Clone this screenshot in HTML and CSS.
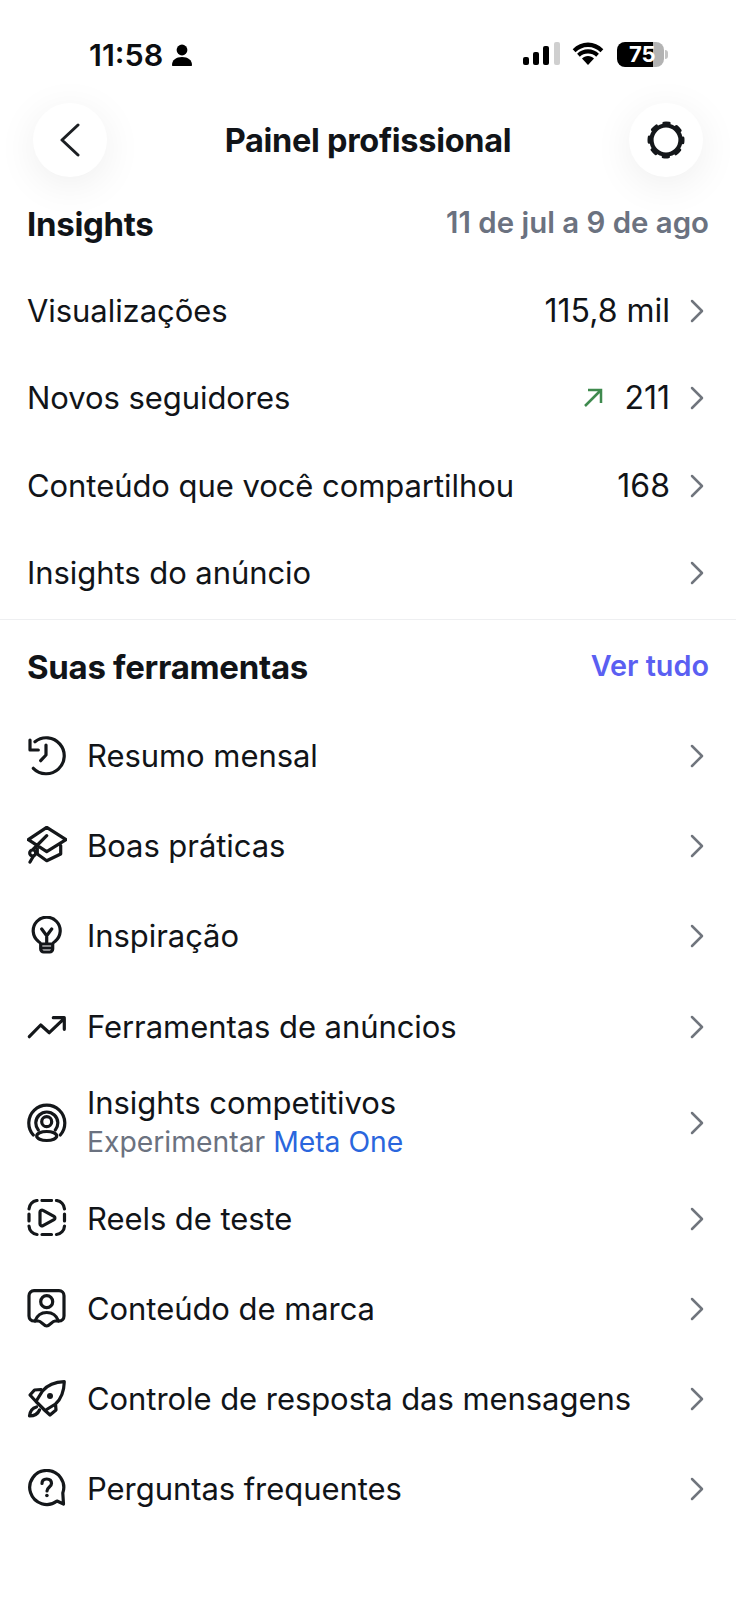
FILE: index.html
```html
<!DOCTYPE html>
<html lang="pt-BR">
<head>
<meta charset="utf-8">
<title>Painel profissional</title>
<link rel="stylesheet" href="styles.css">
</head>
<body>
<div class="status">
  <div class="status-left">
    <span class="clock">11:58</span>
    <svg class="person" viewBox="0 0 20 22" aria-hidden="true"><circle cx="10" cy="6" r="5.4"/><path d="M0 21c0-5 4-8 10-8s10 3 10 8c0 .6-.4 1-1 1H1c-.6 0-1-.4-1-1z"/></svg>
  </div>
  <div class="status-right">
    <svg class="signal" viewBox="0 0 37 24" aria-hidden="true"><rect x="0" y="15" width="6" height="8" rx="2"/><rect x="10" y="10" width="6" height="13" rx="2"/><rect x="20" y="4" width="6" height="19" rx="2"/><rect class="dim" x="31" y="0" width="6" height="23" rx="2"/></svg>
    <svg class="wifi" viewBox="0 0 32 24" aria-hidden="true"><path d="M16 5c5 0 9 2 12.500 5.200l2.800-3C27 3 21.700 .6 16 .6S5 3 .7 7.200l2.800 3C7 7 11 5 16 5z"/><path d="M16 11.500c3.300 0 6 1.200 8.200 3.200l2.700-3C24 9 20.200 7.300 16 7.300S8 9 5.100 11.700l2.700 3c2.200-2 4.900-3.200 8.200-3.200z"/><path d="M16 14c-2.400 0-4.500 1-6 2.400L16 23l6-6.600C20.500 15 18.400 14 16 14z"/></svg>
    <div class="battery"><div class="battery-body"><span class="battery-level">75</span></div><span class="battery-cap"></span></div>
  </div>
</div>

<header class="topbar">
  <button class="round" aria-label="Voltar"><svg class="i-back" viewBox="0 0 20 36"><path d="M18 3 2 18l16 15"/></svg></button>
  <h1 class="title">Painel profissional</h1>
  <button class="round" aria-label="Configurações"><svg class="i-gear" viewBox="0 0 40 40"><circle class="ring" cx="20" cy="20" r="14.500"/><circle class="teeth" cx="20" cy="20" r="17"/></svg></button>
</header>

<section class="insights">
  <div class="sec-head"><h2>Insights</h2><span class="date">11 de jul a 9 de ago</span></div>
  <div class="row"><span class="label">Visualizações</span><span class="value">115,8 mil</span><svg class="chev" viewBox="0 0 14 24"><path d="M2 2l10 10L2 22"/></svg></div>
  <div class="row"><span class="label">Novos seguidores</span><svg class="up" viewBox="0 0 20 20"><path d="M2 18 18 2M5 2h13v13"/></svg><span class="value">211</span><svg class="chev" viewBox="0 0 14 24"><path d="M2 2l10 10L2 22"/></svg></div>
  <div class="row"><span class="label">Conteúdo que você compartilhou</span><span class="value">168</span><svg class="chev" viewBox="0 0 14 24"><path d="M2 2l10 10L2 22"/></svg></div>
  <div class="row"><span class="label">Insights do anúncio</span><svg class="chev" viewBox="0 0 14 24"><path d="M2 2l10 10L2 22"/></svg></div>
</section>

<section class="tools">
  <div class="sec-head tools-head"><h2>Suas ferramentas</h2><a class="all">Ver tudo</a></div>

  <div class="tool"><svg class="ic" viewBox="0 0 40 40"><path d="M8 5.700A18 18 0 1 1 6.300 32.300M3 4v10h8.300M19 9v10l-5.300 5.700"/></svg><span class="label">Resumo mensal</span><svg class="chev" viewBox="0 0 14 24"><path d="M2 2l10 10L2 22"/></svg></div>

  <div class="tool"><svg class="ic" viewBox="0 0 40 40"><path d="M19.700 1.300 39 13.700 19.700 25.700 1.300 13.700zM33.700 19.500V28l-14 6.700-9.400-6.700v-5M19.700 9.700 6.500 23M6.500 30l-3.500 6"/><circle cx="5.700" cy="27" r="3"/></svg><span class="label">Boas práticas</span><svg class="chev" viewBox="0 0 14 24"><path d="M2 2l10 10L2 22"/></svg></div>

  <div class="tool"><svg class="ic" viewBox="0 0 40 40"><path d="M13.700 28C13.700 27 12.800 26.300 11.200 25.200A13.500 13.500 0 1 1 28.200 25.200C26.600 26.300 25.700 27 25.700 28v5a3 3 0 0 1-3 3h-6a3 3 0 0 1-3-3zM14.700 13l5 6.700 5-6.700M19.700 19.700V28M13.700 28h12M13.700 32h12"/></svg><span class="label">Inspiração</span><svg class="chev" viewBox="0 0 14 24"><path d="M2 2l10 10L2 22"/></svg></div>

  <div class="tool"><svg class="ic" viewBox="0 0 40 40"><path d="M2.300 29.700 13.700 18l8.600 7.700L37.300 11.300M26.300 10.700h11v11.600"/></svg><span class="label">Ferramentas de anúncios</span><svg class="chev" viewBox="0 0 14 24"><path d="M2 2l10 10L2 22"/></svg></div>

  <div class="tool tool-tall"><svg class="ic" viewBox="0 0 40 40"><path d="M6.300 32a18 18 0 1 1 27 0M11.300 27a11 11 0 1 1 17 0"/><circle cx="19.700" cy="18.700" r="5"/><ellipse cx="19.700" cy="33" rx="10" ry="4.500"/></svg><div class="stack"><span class="label">Insights competitivos</span><span class="sub">Experimentar <span class="meta">Meta One</span></span></div><svg class="chev" viewBox="0 0 14 24"><path d="M2 2l10 10L2 22"/></svg></div>

  <div class="tool"><svg class="ic" viewBox="0 0 40 40"><path d="M2 10a9 9 0 0 1 8-8.500M15 1.500h9.500M29.500 1.500a9 9 0 0 1 8 8.500M37.500 15v7M37.500 27a9 9 0 0 1-8 8.500M24.500 35.500H15M10 35.500a9 9 0 0 1-8-8.500M2 22v-7"/><path d="M13 13a2 2 0 0 1 3-1.700l11 6a2 2 0 0 1 0 3.400l-11 6a2 2 0 0 1-3-1.700z"/></svg><span class="label">Reels de teste</span><svg class="chev" viewBox="0 0 14 24"><path d="M2 2l10 10L2 22"/></svg></div>

  <div class="tool"><svg class="ic" viewBox="0 0 40 40"><path d="M7 1.700h25a5 5 0 0 1 5 5V27a5 5 0 0 1-5 5h-4c-3 0-5 5-8.300 5s-5.300-5-8.300-5H7a5 5 0 0 1-5-5V6.700a5 5 0 0 1 5-5z"/><circle cx="19.700" cy="12.700" r="6"/><path d="M8 32c2-5.500 6-8.500 11.700-8.500s9.800 3 11.800 8.500"/></svg><span class="label">Conteúdo de marca</span><svg class="chev" viewBox="0 0 14 24"><path d="M2 2l10 10L2 22"/></svg></div>

  <div class="tool"><svg class="ic" viewBox="0 0 40 40"><path d="M37.300 2.700C28 3 20.500 6 15.500 12L9 22.500l9 9 10.500-6.500c5.500-5 8.500-12.500 8.800-22.300zM14 10.500 7.500 11 3 16l6 6.500M28.500 25l.5 6-6 5-5-4.500M9.500 28c-4 1-6.500 4-7 9 5 0 8.500-2.500 10-6"/><circle class="solid" cx="23" cy="17" r="3"/></svg><span class="label">Controle de resposta das mensagens</span><svg class="chev" viewBox="0 0 14 24"><path d="M2 2l10 10L2 22"/></svg></div>

  <div class="tool"><svg class="ic" viewBox="0 0 40 40"><path d="M35.800 24A17 17 0 1 0 30 32l6.500 3z"/><path d="M15 14.500c0-3 2-4.500 4.700-4.500s4.800 1.500 4.800 4.500c0 3.500-4.500 3.500-4.500 7.500"/><circle class="solid" cx="19.900" cy="26.500" r="1.800"/></svg><span class="label">Perguntas frequentes</span><svg class="chev" viewBox="0 0 14 24"><path d="M2 2l10 10L2 22"/></svg></div>
</section>
</body>
</html>
```
FILE: styles.css
```css
* { box-sizing: border-box; }
html, body { margin: 0; padding: 0; background: #fff; }
body {
  width: 736px;
  height: 1600px;
  overflow: hidden;
  font-family: Inter, "Liberation Sans", sans-serif;
  color: #111418;
}
svg { display: block; flex: none; }

.status {
  height: 103px;
  padding: 41px 68px 0 89px;
  display: flex;
  justify-content: space-between;
  align-items: flex-start;
}
.status-left { display: flex; align-items: center; gap: 9px; height: 27px; }
.clock { font-size: 30.500px; font-weight: 600; line-height: 27px; color: #0c0e11; }
.person { width: 20px; height: 22px; fill: #000; }
.status-right { display: flex; align-items: center; height: 26px; }
.signal { width: 37px; height: 24px; fill: #000; }
.signal .dim { fill: #cfcfcf; }
.wifi { width: 32px; height: 24px; fill: #000; margin-left: 12px; }
.battery { display: flex; align-items: center; margin-left: 13px; }
.battery-body {
  width: 47px;
  height: 25px;
  border-radius: 8px;
  background: linear-gradient(90deg, #000 0 76%, #b3b3b3 76% 100%);
  display: flex;
  align-items: center;
  padding-left: 12px;
}
.battery-level { color: #fff; font-size: 22px; font-weight: 700; line-height: 25px; }
.battery-cap { width: 3px; height: 9px; border-radius: 0 3px 3px 0; background: #c4c4c4; margin-left: 1px; }

.topbar {
  height: 74px;
  padding: 0 33px;
  display: flex;
  justify-content: space-between;
  align-items: center;
}
.round {
  width: 74px;
  height: 74px;
  border: 0;
  padding: 0;
  border-radius: 50%;
  background: #fff;
  box-shadow: 0 8px 40px rgba(0, 0, 0, .07);
  display: flex;
  align-items: center;
  justify-content: center;
}
.i-back { width: 20px; height: 36px; fill: none; stroke: #1c1f23; stroke-width: 3; stroke-linecap: round; stroke-linejoin: round; }
.i-gear { width: 40px; height: 40px; fill: none; stroke: #14171a; }
.ring { stroke-width: 4.200; }
.teeth { stroke-width: 3; stroke-linecap: round; stroke-dasharray: 5.500 7.852; stroke-dashoffset: 2.750; }
.title { margin: 0; padding-top: 2px; font-size: 32.500px; font-weight: 700; letter-spacing: -.3px; line-height: 40px; }

.sec-head {
  display: flex;
  justify-content: space-between;
  align-items: center;
  padding: 0 27px;
  height: 48px;
}
.sec-head h2 { margin: 0; font-size: 33px; font-weight: 700; letter-spacing: -.3px; }
.date { font-size: 29.400px; font-weight: 600; color: #6b7280; padding-bottom: 4px; }
.all { font-size: 28.800px; font-weight: 600; color: #5b5ff2; padding-bottom: 4px; }

.insights { border-bottom: 1px solid #eeeff1; height: 443px; padding-top: 23px; }
.insights .sec-head { margin-bottom: 19px; }
.row {
  height: 87.500px;
  display: flex;
  align-items: center;
  padding: 0 32px 0 27px;
}
.tools { padding-top: 23px; }
.tools-head { margin-bottom: 20px; }
.tool {
  height: 90.200px;
  display: flex;
  align-items: center;
  padding: 0 32px 0 27px;
}
.tool-tall { height: 102px; }
.label { font-size: 31px; line-height: 38px; flex: none; letter-spacing: -.06px; }
.row .label { margin-right: auto; }
.tool .label, .stack { margin-right: auto; margin-left: 20px; }
.stack .label { margin: 0; }
.stack { display: flex; flex-direction: column; }
.sub { font-size: 28.300px; line-height: 40px; color: #6b7280; }
.meta { color: #2a66dd; }
.value { font-size: 32px; line-height: 38px; margin-right: 20px; }
.up { width: 20px; height: 20px; fill: none; stroke: #3f8a4e; stroke-width: 2.500; margin-right: 21px; }
.chev { width: 14px; height: 24px; fill: none; stroke: #70757d; stroke-width: 2.500; stroke-linecap: round; stroke-linejoin: round; }
.ic { width: 40px; height: 40px; fill: none; stroke: #14171a; stroke-width: 3.200; stroke-linecap: round; stroke-linejoin: round; }
.ic .solid { fill: #14171a; stroke: none; }
```
